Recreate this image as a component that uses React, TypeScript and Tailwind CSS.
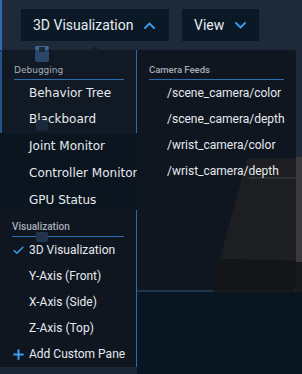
import { Check, Plus } from "lucide-react";

const debugItems = ["Behavior Tree", "Blackboard"];
const monitorItems = ["Joint Monitor", "Controller Monitor", "GPU Status"];
const vizItems = ["3D Visualization", "Y-Axis (Front)", "X-Axis (Side)", "Z-Axis (Top)"];
const cameraFeeds = [
  "/scene_camera/color",
  "/scene_camera/depth",
  "/wrist_camera/color",
  "/wrist_camera/depth",
];

function Chevron({ up }: { up?: boolean }) {
  return (
    <svg width="11" height="7" viewBox="0 0 11 7" className="shrink-0">
      <path
        d={up ? "M1 6 L5.5 1.5 L10 6" : "M1 1 L5.5 5.5 L10 1"}
        fill="none"
        stroke="#3d9df0"
        strokeWidth="1.8"
        strokeLinecap="round"
        strokeLinejoin="round"
      />
    </svg>
  );
}

function SectionHeader({ label, dejavu }: { label: string; dejavu?: boolean }) {
  return (
    <div
      className={`mx-[12px] h-[12px] leading-[12px] border-b border-[#2d6ab0] box-content pb-[3px] text-[#a7afba] ${
        dejavu ? "font-['DejaVu_Sans'] text-[9px]" : "font-['Roboto'] font-medium text-[10px]"
      }`}
    >
      {label}
    </div>
  );
}

export default function App() {
  return (
    <div className="w-[302px] h-[374px] overflow-hidden bg-[#1e2a3a] flex flex-col relative font-['Roboto',sans-serif]">
      {/* Top bar */}
      <div className="h-[50px] shrink-0 flex items-start gap-[13px] pl-[19px] pt-[9px] border-l-2 border-[#2d6ab0]">
        <button className="h-[32px] w-[148px] flex items-center pl-[12px] gap-[11px] bg-[#0b1825] text-[14px] text-[#e9edf2]">
          3D Visualization
          <Chevron up />
        </button>
        <button className="h-[32px] w-[77px] flex items-center pl-[12px] gap-[11px] bg-[#0b1825] text-[14px] text-[#e9edf2]">
          View
          <Chevron />
        </button>
      </div>

      {/* faint toolbar icons under the menu */}
      <svg width="14" height="16" viewBox="0 0 14 16" className="absolute left-[35px] top-[46px]">
        <rect x="0" y="0" width="14" height="4" rx="2" fill="#3f6895" />
        <rect x="0" y="4" width="14" height="12" rx="2" fill="#2a476b" />
        <rect x="4" y="1" width="6" height="5" fill="#1a2838" />
      </svg>
      <div className="absolute left-[36px] top-[120px] w-[12px] h-[11px] rounded-[3px] bg-[#1a2a3e]" />
      <div className="absolute left-[36px] top-[232px] w-[12px] h-[10px] rounded-[2px] bg-[#22344c]" />

      {/* Dropdown */}
      <div className="absolute left-[90px] top-[46px] w-0 h-0 border-x-[5px] border-x-transparent border-b-[5px] border-b-[#161e29]" />
      <div className="flex flex-1 min-h-0">
        {/* Left column */}
        <div className="w-[137px] shrink-0 flex flex-col">
          <div className="h-[83px] bg-[#111924] border-l-2 border-[#24538a] border-r border-r-[#2d6ab0] rounded-tl-[3px] pt-[14px]">
            <SectionHeader label="Debugging" dejavu />
            {debugItems.map((item) => (
              <div
                key={item}
                className="h-[26px] leading-[26px] pl-[27px] font-['DejaVu_Sans'] text-[12px] text-[#e6e9ee] whitespace-nowrap"
              >
                {item}
              </div>
            ))}
          </div>
          <div className="h-[77px] bg-[#0b1520]">
            {monitorItems.map((item) => (
              <div
                key={item}
                className="h-[27px] leading-[27px] pl-[29px] font-['DejaVu_Sans'] text-[12px] text-[#e6e9ee] whitespace-nowrap"
              >
                {item}
              </div>
            ))}
          </div>
          <div className="h-[157px] bg-[#0f1620] border-r border-r-[#2d6ab0] pt-[11px]">
            <SectionHeader label="Visualization" />
            {vizItems.map((item, idx) => (
              <div
                key={item}
                className="h-[26px] flex items-center pl-[12px] gap-[4px] text-[12px] text-[#e6e9ee] whitespace-nowrap"
              >
                <span className="w-[13px] h-[13px] flex">
                  {idx === 0 && <Check size={13} strokeWidth={2.8} color="#3d9df0" />}
                </span>
                {item}
              </div>
            ))}
            <div className="h-[26px] flex items-center pl-[11px] gap-[3px] text-[12px] text-[#e6e9ee] whitespace-nowrap">
              <Plus size={15} strokeWidth={3.2} color="#3d9df0" />
              Add Custom Pane
            </div>
          </div>
          <div className="flex-1 bg-[#1a2636]" />
        </div>

        {/* Right side */}
        <div className="flex-1 flex flex-col">
          <div className="h-[240px] flex">
            <div className="w-[159px] relative bg-[#0f1620] rounded-br-[4px] rounded-tr-[3px] overflow-hidden pt-[14px]">
              <svg width="159" height="240" viewBox="0 0 159 240" className="absolute inset-0">
                <polygon points="110,108 159,108 159,211 83,209" fill="#1d1e21" />
                <polygon points="83,209 159,211 159,240 75,240" fill="#141518" />
                <rect x="112" y="127" width="47" height="2" fill="#2f3033" />
              </svg>
              <div className="relative">
                <div className="mx-[12px] h-[12px] leading-[12px] border-b border-[#2d6ab0] box-content pb-[3px] text-[9.5px] font-medium text-[#a7afba]">
                  Camera Feeds
                </div>
                {cameraFeeds.map((feed) => (
                  <div
                    key={feed}
                    className="h-[26px] leading-[26px] pl-[30px] text-[12px] text-[#e6e9ee] whitespace-nowrap"
                  >
                    {feed}
                  </div>
                ))}
              </div>
            </div>
            <div className="flex-1 flex flex-col">
              <div className="h-[107px] bg-[#1e2a3a]" />
              <div className="h-[105px] bg-[#3a3a3b]" />
              <div className="flex-1 bg-[#18191b]" />
            </div>
          </div>
          <div className="flex h-[2px]">
            <div className="w-[76px] bg-[#1e3550]" />
            <div className="flex-1 bg-[#1a1b1d]" />
          </div>
          <div className="flex-1 bg-[#0a1522]" />
        </div>
      </div>
    </div>
  );
}
